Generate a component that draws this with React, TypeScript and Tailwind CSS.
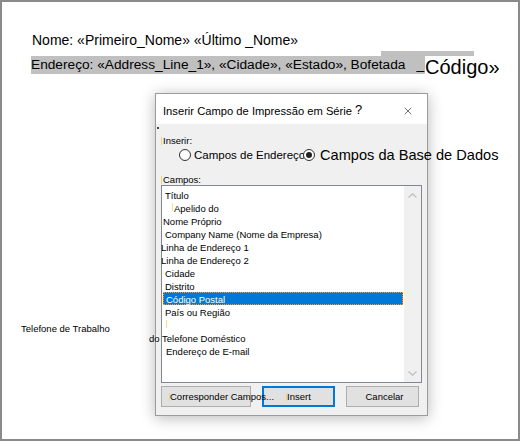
import { X } from "lucide-react";

const fields = [
  { label: "Título", cls: "pl-[3px]" },
  { label: "Apelido do", cls: "pl-[10px]", mark: true },
  { label: "Nome Próprio", cls: "pl-[1px]" },
  { label: "Company Name (Nome da Empresa)", cls: "pl-[3px]" },
  { label: "Linha de Endereço 1", cls: "-ml-[1px]" },
  { label: "Linha de Endereço 2", cls: "-ml-[1px]" },
  { label: "Cidade", cls: "pl-[3px]" },
  { label: "Distrito", cls: "pl-[3px]" },
  { label: "Código Postal", cls: "pl-[3px]", selected: true },
  { label: "País ou Região", cls: "pl-[3px]" },
  { label: "", cls: "pl-[4px]", mark: true },
  { label: "do Telefone Doméstico", cls: "-ml-[13px]" },
  { label: "Endereço de E-mail", cls: "pl-[4px]" },
];

function Radio({ checked }: { checked?: boolean }) {
  return (
    <span className="flex h-[12px] w-[12px] shrink-0 items-center justify-center rounded-full border border-[#333] bg-white">
      {checked && <span className="h-[6px] w-[6px] rounded-full bg-[#222]" />}
    </span>
  );
}

function Chevron({ up }: { up?: boolean }) {
  return (
    <svg width="9" height="5" viewBox="0 0 9 5" className="block">
      <path
        d={up ? "M0.5 4.5 L4.5 0.8 L8.5 4.5" : "M0.5 0.5 L4.5 4.2 L8.5 0.5"}
        fill="none"
        stroke="#c2c2c2"
        strokeWidth="1.4"
      />
    </svg>
  );
}

export default function App() {
  return (
    <div
      className="relative h-[441px] w-[520px] overflow-hidden border-2 border-[#8a8a8a] bg-white text-black"
      style={{ fontFamily: '"Liberation Sans", Arial, sans-serif' }}
    >
      {/* document text */}
      <div className="pt-[29px]">
        <div className="pl-[30px] text-[14px] leading-[18px] whitespace-nowrap">
          Nome: «Primeiro_Nome» «Último _Nome»
        </div>
        <div className="mt-[2px] ml-[379px] h-[5px] w-[93px] bg-[#c0c0c0]" />
        <div className="flex items-start pl-[29px]">
          <span className="flex h-[18px] w-[394px] items-start justify-between bg-[#c0c0c0] text-[13.7px] leading-[16px] whitespace-nowrap">
            <span className="pt-[1px]">Endereço: «Address_Line_1», «Cidade», «Estado», Bofetada</span>
            <span className="pt-[1px] pr-[1px]">_</span>
          </span>
          <span className="mt-[1px] text-[20px] leading-[20px] whitespace-nowrap">Código»</span>
        </div>
        <div className="mt-[246px] pl-[19px] text-[9.5px] leading-[12px] whitespace-nowrap">
          Telefone de Trabalho
        </div>
      </div>

      {/* dialog */}
      <div className="absolute top-[91px] left-[153px] w-[273px] border border-[#9b9b9b] bg-[#f0f0f0] shadow-[0_2px_14px_rgba(0,0,0,0.28)]">
        <div className="flex h-[30px] items-start bg-white pt-[10px] pl-[7px]">
          <span className="text-[11.2px] leading-[14px] whitespace-nowrap">
            Inserir Campo de Impressão em Série
          </span>
          <span className="ml-[3px] -mt-[1px] text-[13px] leading-[14px]">?</span>
          <X className="mt-[1px] ml-[40px] h-[12px] w-[12px] text-[#222]" strokeWidth={1.3} />
        </div>

        <div className="px-[5px] pt-[3px] pb-[8px] text-[9.5px]">
          <div className="-ml-[4px] h-[2px] w-[2px] bg-[#444]" />

          <div className="mt-[6px] flex items-center leading-[11px]">
            <span className="h-[8px] w-[1px] bg-[#f2d27a]" />
            <span className="ml-[1px]">Inserir:</span>
          </div>

          <div className="mt-[3px] flex h-[12px] items-center pl-[18px] whitespace-nowrap">
            <Radio />
            <span className="ml-[3px] w-[109px] text-[11.5px] leading-[12px]">Campos de Endereço</span>
            <Radio checked />
            <span className="ml-[5px] text-[14.6px] leading-[12px]">Campos da Base de Dados</span>
          </div>

          <div className="mt-[13px] flex items-center leading-[11px]">
            <span className="h-[8px] w-[1px] bg-[#f2d27a]" />
            <span className="ml-[1px]">Campos:</span>
          </div>

          <div className="flex h-[198px] w-[261px] border border-[#828790] bg-white">
            <div className="flex-1 pt-[2px]">
              {fields.map((f, i) =>
                f.selected ? (
                  <div
                    key={i}
                    className="ml-[1px] h-[13px] w-[240px] border border-dotted border-[#f0a040] bg-[#0078d7] pl-[2px] leading-[12px] text-white whitespace-nowrap"
                  >
                    <span className="block pt-[0.5px]">{f.label}</span>
                  </div>
                ) : (
                  <div key={i} className={`flex h-[13px] items-start whitespace-nowrap ${f.cls}`}>
                    {f.mark && <span className="mt-[2px] mr-[1px] h-[8px] w-[1px] bg-[#f4e08a]" />}
                    <span className="pt-[1.5px] leading-[12px]">{f.label}</span>
                  </div>
                )
              )}
            </div>
            <div className="flex w-[17px] flex-col items-center justify-between bg-[#f0f0f0] pt-[7px] pb-[6px]">
              <Chevron up />
              <Chevron />
            </div>
          </div>

          <div className="mt-[3px] flex h-[21px] gap-[11px] leading-[12px] whitespace-nowrap">
            <button className="flex w-[90px] items-center border border-[#adadad] bg-[#e1e1e1] pl-[7px]">
              <span className="relative z-10 flex items-center">
                <span className="h-[8px] w-[1px] bg-[#f2d27a]" />
                Corresponder Campos...
              </span>
            </button>
            <button className="flex w-[73px] items-center justify-center border-2 border-[#0078d7] bg-[#e1e1e1]">
              <span className="flex items-center">
                <span className="h-[8px] w-[1px] bg-[#f2d27a]" />
                Insert
              </span>
            </button>
            <button className="flex w-[73px] items-center justify-center border border-[#adadad] bg-[#e1e1e1] pl-[4px]">
              Cancelar
            </button>
          </div>
        </div>
      </div>
    </div>
  );
}
